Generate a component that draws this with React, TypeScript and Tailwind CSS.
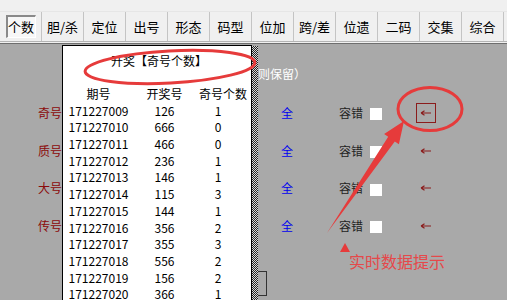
const tabs = ['个数', '胆/杀', '定位', '出号', '形态', '码型', '位加', '跨/差', '位遗', '二码', '交集', '综合'];

const rows = [
  ['171227009', '126', '1'],
  ['171227010', '666', '0'],
  ['171227011', '466', '0'],
  ['171227012', '236', '1'],
  ['171227013', '146', '1'],
  ['171227014', '115', '3'],
  ['171227015', '144', '1'],
  ['171227016', '356', '2'],
  ['171227017', '355', '3'],
  ['171227018', '556', '2'],
  ['171227019', '156', '2'],
  ['171227020', '366', '1'],
];

const labels = ['奇号', '质号', '大号', '传号'];

function SmallArrow() {
  return (
    <svg width="12" height="6" viewBox="0 0 12 6">
      <path d="M1 3H11M1 3L4.5 0.8M1 3L4.5 5.2" stroke="#8b1c1c" strokeWidth="1.2" fill="none" />
    </svg>
  );
}

export default function App() {
  return (
    <div className="relative w-[507px] h-[300px] overflow-hidden bg-[#a9a9a9] font-['Noto_Sans_CJK_SC',sans-serif] text-[12px] text-black">
      {/* tab strip */}
      <div className="h-[44px] bg-[#f0f0f0] border-b border-[#6e6e6e]">
        <div className="h-[12px] border-b border-[#e6e6e6]" />
        <div className="flex h-[30px] border-b border-[#b4b4b4]">
          {tabs.map((t, i) => (
            <div key={t} className="w-[42px] h-full flex items-center justify-center border-r border-[#c4c4c4] text-[13px]">
              {i === 0 ? (
                <span className="w-[30px] h-[23px] flex items-center justify-center border-t-2 border-l-2 border-t-[#8a8a8a] border-l-[#8a8a8a] border-r border-b border-r-white border-b-white bg-[#f7f7f7]">
                  {t}
                </span>
              ) : (
                t
              )}
            </div>
          ))}
        </div>
      </div>

      {/* panel behind the popup */}
      <div className="pt-[21px]">
        <div className="pl-[234px] h-[17px] leading-[17px] text-white">号码则保留）</div>
        <div className="mt-[12px]">
          {labels.map((l, i) => (
            <div key={l} className="flex items-center h-[37.7px] pl-[38px]">
              <span className="w-[214px] text-[#8b0a0a]">{l}</span>
              <span className="w-[29px]">3</span>
              <span className="w-[58px] text-[#0000ee]">全</span>
              <span className="w-[31px] text-[#222]">容错</span>
              <span className="w-[12px] h-[12px] bg-white mt-[3px]" />
              <span
                className={
                  'ml-[34px] w-[20px] h-[20px] flex items-center justify-center ' +
                  (i === 0 ? 'border border-[#8b1c1c]' : '')
                }
              >
                <SmallArrow />
              </span>
            </div>
          ))}
        </div>
      </div>

      {/* half hidden button */}
      <div className="absolute left-[240px] top-[271px] w-[27px] h-[25px] border border-[#333]" />

      {/* popup */}
      <div className="absolute left-[62px] top-[45px] w-[190px] h-[270px] bg-white border border-black">
        <div className="pt-[6px] h-[24px] leading-[17px] text-center pl-[4px]">开奖【奇号个数】</div>
        <div className="mt-[15px]">
          <div className="grid grid-cols-[71px_61px_56px] h-[17px] leading-[17px] text-center">
            <span>期号</span>
            <span>开奖号</span>
            <span>奇号个数</span>
          </div>
          <div className="mt-[0.7px]">
            {rows.map(r => (
              <div key={r[0]} className="grid grid-cols-[71px_61px_56px] h-[16.7px] leading-[16.7px] text-center">
                <span>{r[0]}</span>
                <span>{r[1]}</span>
                <span className="pr-[10px]">{r[2]}</span>
              </div>
            ))}
          </div>
        </div>
      </div>
      <div className="absolute left-[252px] top-[46px] w-[6px] h-[260px] bg-[repeating-conic-gradient(#222_0_25%,#d8d8d8_0_50%)] bg-[length:2px_2px]" />

      {/* annotations */}
      <svg className="absolute inset-0 pointer-events-none" width="507" height="300" viewBox="0 0 507 300">
        <ellipse cx="170" cy="67" rx="85" ry="16" transform="rotate(-3 170 67)" fill="none" stroke="#e63b3b" strokeWidth="3" />
        <ellipse cx="430" cy="109" rx="32" ry="21.5" fill="none" stroke="#e63b3b" strokeWidth="3" />
        <polygon
          points="404,121 398.9,144.2 394.8,141.4 327,233 388.2,136.8 384.1,134"
          fill="#e63b3b"
        />
        <polygon points="345,243 340,252 350,252" fill="#e63b3b" />
      </svg>
      <div className="absolute left-[349px] top-[251px] text-[16px] leading-[20px] text-[#e5484a]">实时数据提示</div>
    </div>
  );
}
